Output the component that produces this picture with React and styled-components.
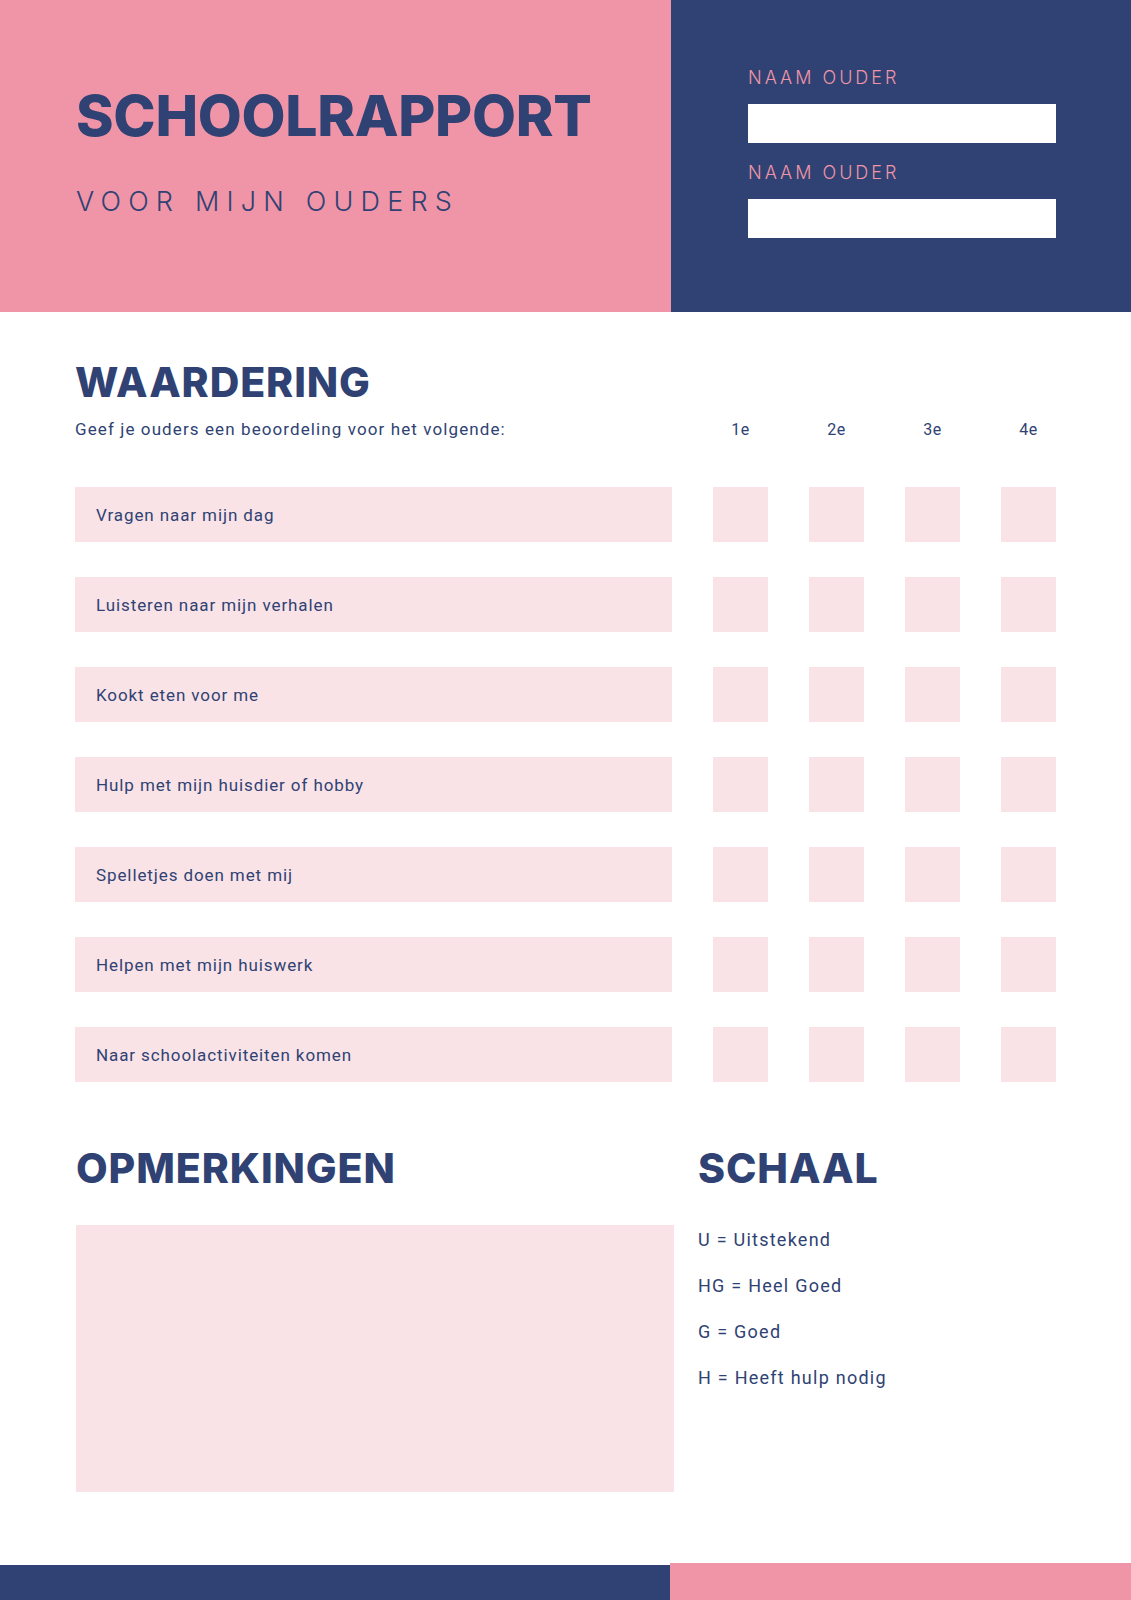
import styled, { createGlobalStyle } from "styled-components";

const GlobalStyle = createGlobalStyle`
  html, body {
    margin: 0;
    padding: 0;
    background: #ffffff;
  }
  * { box-sizing: border-box; }
`;

const navy = "#2f4273";
const pink = "#f095a7";
const blush = "#f9e3e7";

const Page = styled.div`
  width: 1131px;
  height: 1600px;
  display: flex;
  flex-direction: column;
  background: #ffffff;
  color: ${navy};
  font-family: Roboto, "Liberation Sans", sans-serif;
`;

const Header = styled.header`
  display: grid;
  grid-template-columns: 671px 1fr;
  height: 312px;
`;

const TitleBlock = styled.div`
  background: ${pink};
  padding: 87px 0 0 76px;
`;

const Title = styled.h1`
  margin: 0;
  font-family: Inter, "Liberation Sans", sans-serif;
  font-weight: 800;
  font-size: 57px;
  line-height: 1;
  letter-spacing: -0.3px;
  color: ${navy};
`;

const Subtitle = styled.div`
  margin-top: 44px;
  font-family: Inter, "Liberation Sans", sans-serif;
  font-weight: 300;
  font-size: 27px;
  line-height: 1;
  letter-spacing: 7.2px;
`;

const ParentPanel = styled.div`
  background: ${navy};
  padding: 69px 0 0 77px;
  display: flex;
  flex-direction: column;
`;

const FieldLabel = styled.div`
  font-family: Inter, "Liberation Sans", sans-serif;
  font-weight: 300;
  font-size: 18px;
  line-height: 1;
  letter-spacing: 3px;
  color: ${pink};
  margin-top: ${(p) => (p.$first ? "0" : "21px")};
`;

const FieldBox = styled.div`
  width: 308px;
  height: 39px;
  margin-top: 17px;
  background: #ffffff;
`;

const Section = styled.section`
  padding: 0 0 0 75px;
`;

const Heading = styled.h2`
  margin: 0;
  font-family: Inter, "Liberation Sans", sans-serif;
  font-weight: 800;
  font-size: 41px;
  line-height: 1;
  letter-spacing: 0.9px;
  color: ${navy};
`;

const RatingSection = styled(Section)`
  padding-top: 50px;
`;

const RatingGrid = styled.div`
  display: grid;
  grid-template-columns: 597px repeat(4, 55px);
  column-gap: 41px;
  row-gap: 35px;
  margin-top: 18px;
`;

const Intro = styled.div`
  font-size: 17px;
  line-height: 17px;
  letter-spacing: 1.1px;
  margin-bottom: 14px;
`;

const Term = styled.div`
  font-size: 16px;
  line-height: 17px;
  letter-spacing: 0.5px;
  text-align: center;
  margin-bottom: 14px;
`;

const Item = styled.div`
  height: 55px;
  background: ${blush};
  display: flex;
  align-items: center;
  padding-left: 21px;
  font-size: 17px;
  letter-spacing: 0.9px;
`;

const Box = styled.div`
  height: 55px;
  background: ${blush};
`;

const BottomSection = styled(Section)`
  padding-top: 66px;
  padding-left: 76px;
  display: grid;
  grid-template-columns: 598px 1fr;
  column-gap: 24px;
  row-gap: 36px;
`;

const NotesBox = styled.div`
  height: 267px;
  background: ${blush};
`;

const ScaleList = styled.ul`
  list-style: none;
  margin: 0;
  padding: 6px 0 0;
  display: flex;
  flex-direction: column;
  gap: 28px;
`;

const ScaleItem = styled.li`
  font-size: 18px;
  line-height: 18px;
  letter-spacing: 1.25px;
`;

const Footer = styled.footer`
  margin-top: auto;
  display: grid;
  grid-template-columns: 670px 1fr;
  align-items: end;
  height: 37px;
`;

const FooterBar = styled.div`
  height: ${(p) => p.$h}px;
  background: ${(p) => p.$color};
`;

const items = [
  "Vragen naar mijn dag",
  "Luisteren naar mijn verhalen",
  "Kookt eten voor me",
  "Hulp met mijn huisdier of hobby",
  "Spelletjes doen met mij",
  "Helpen met mijn huiswerk",
  "Naar schoolactiviteiten komen",
];

const terms = ["1e", "2e", "3e", "4e"];

const scale = [
  "U = Uitstekend",
  "HG = Heel Goed",
  "G = Goed",
  "H = Heeft hulp nodig",
];

const App = () => {
  return (
    <Page>
      <GlobalStyle />
      <Header>
        <TitleBlock>
          <Title>SCHOOLRAPPORT</Title>
          <Subtitle>VOOR MIJN OUDERS</Subtitle>
        </TitleBlock>
        <ParentPanel>
          <FieldLabel $first>NAAM OUDER</FieldLabel>
          <FieldBox />
          <FieldLabel>NAAM OUDER</FieldLabel>
          <FieldBox />
        </ParentPanel>
      </Header>

      <RatingSection>
        <Heading>WAARDERING</Heading>
        <RatingGrid>
          <Intro>Geef je ouders een beoordeling voor het volgende:</Intro>
          {terms.map((t) => (
            <Term key={t}>{t}</Term>
          ))}
          {items.map((item) => [
            <Item key={item}>{item}</Item>,
            ...terms.map((t) => <Box key={item + t} />),
          ])}
        </RatingGrid>
      </RatingSection>

      <BottomSection>
        <Heading>OPMERKINGEN</Heading>
        <Heading>SCHAAL</Heading>
        <NotesBox />
        <ScaleList>
          {scale.map((s) => (
            <ScaleItem key={s}>{s}</ScaleItem>
          ))}
        </ScaleList>
      </BottomSection>

      <Footer>
        <FooterBar $h={35} $color={navy} />
        <FooterBar $h={37} $color={pink} />
      </Footer>
    </Page>
  );
};

export default App;
